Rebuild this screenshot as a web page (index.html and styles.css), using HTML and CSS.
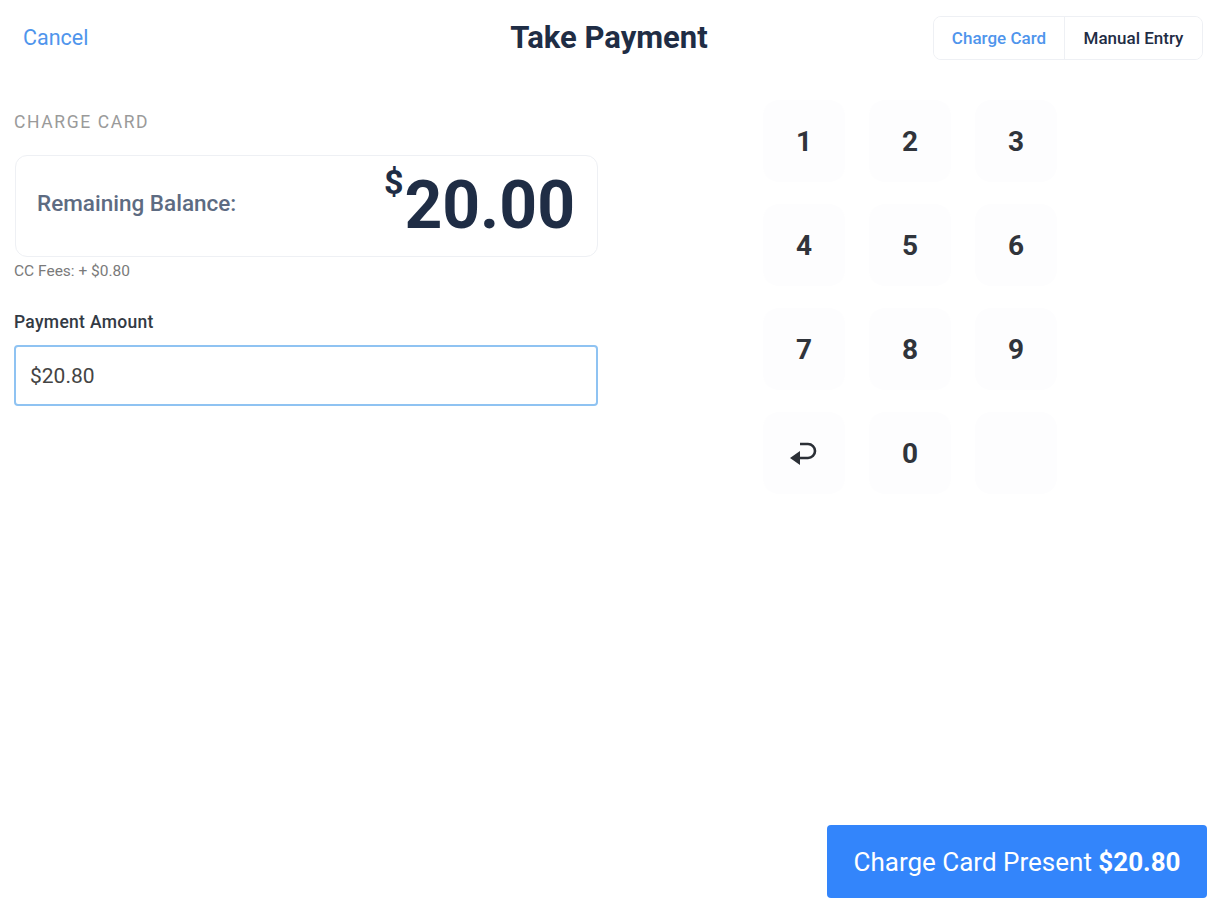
FILE: index.html
```html
<!DOCTYPE html>
<html lang="en">

<head>
    <meta charset="UTF-8">
    <meta name="viewport" content="width=device-width, initial-scale=1.0">
    <title>Take Payment</title>
    <link rel="stylesheet" href="styles.css">
</head>

<body>
    <div class="screen">
        <!-- Top bar -->
        <header class="topbar">
            <a class="cancel" href="#">Cancel</a>
            <h1 class="title">Take Payment</h1>
            <div class="segmented">
                <button class="seg active">Charge Card</button>
                <button class="seg">Manual Entry</button>
            </div>
        </header>

        <main class="content">
            <!-- Balance + amount -->
            <section class="left">
                <div class="section-title">CHARGE CARD</div>
                <div class="balance-card">
                    <span class="balance-label">Remaining Balance:</span>
                    <span class="balance-amount"><sup>$</sup>20.00</span>
                </div>
                <div class="fees">CC Fees: + $0.80</div>

                <label class="field-label" for="amount">Payment Amount</label>
                <input class="amount-input" type="text" id="amount" value="$20.80">
            </section>

            <!-- Keypad -->
            <section class="keypad">
                <button class="key">1</button>
                <button class="key">2</button>
                <button class="key">3</button>
                <button class="key">4</button>
                <button class="key">5</button>
                <button class="key">6</button>
                <button class="key">7</button>
                <button class="key">8</button>
                <button class="key">9</button>
                <button class="key">
                    <svg width="34" height="30" viewBox="0 0 34 30" fill="none">
                        <path d="M12 20h9a7 7 0 0 0 0-14h-8" stroke="#2b2f36" stroke-width="2.6" />
                        <path d="M3 20l10-7v14z" fill="#2b2f36" />
                    </svg>
                </button>
                <button class="key">0</button>
                <button class="key blank"></button>
            </section>
        </main>

        <footer class="footer">
            <button class="charge-btn">Charge Card Present <strong>$20.80</strong></button>
        </footer>
    </div>
</body>

</html>
```

FILE: styles.css
```css
/* Take payment screen */
* {
    box-sizing: border-box;
}

body {
    margin: 0;
    background: #ffffff;
    font-family: Roboto, "Noto Sans", Arial, sans-serif;
    color: #2b2f36;
}

.screen {
    height: 915px;
    display: flex;
    flex-direction: column;
    background: #fff;
}

.topbar {
    height: 75px;
    display: flex;
    align-items: center;
    justify-content: space-between;
    padding: 0 16px 0 23px;
}

.cancel {
    width: 270px;
    color: #4f95ec;
    font-size: 21.5px;
    text-decoration: none;
}

.title {
    margin: 0 0 0 -8px;
    font-size: 31px;
    font-weight: 700;
    color: #1f2d45;
}

.segmented {
    width: 270px;
    height: 44px;
    display: flex;
    border: 1px solid #eef0f4;
    border-radius: 8px;
    overflow: hidden;
}

.seg {
    border: none;
    background: #fff;
    font-family: inherit;
    font-size: 17px;
    font-weight: 500;
    color: #1f2d45;
    cursor: pointer;
    padding: 0;
}

.seg.active {
    width: 131px;
    color: #4f95ec;
    border-right: 1px solid #eef0f4;
}

.seg:last-child {
    flex: 1;
}

.content {
    flex: 1;
    display: flex;
    gap: 165px;
    padding: 0 0 0 14px;
}

.left {
    width: 584px;
    padding-top: 36px;
}

.section-title {
    font-size: 17.5px;
    line-height: 22px;
    letter-spacing: 1.6px;
    color: #9a9a9a;
    margin-bottom: 22px;
}

.balance-card {
    height: 102px;
    margin-left: 1px;
    border: 1px solid #eef0f4;
    border-radius: 12px;
    display: flex;
    align-items: center;
    justify-content: space-between;
    padding: 0 22px 0 21px;
}

.balance-label {
    font-size: 22.5px;
    font-weight: 500;
    color: #5d6b82;
    margin-bottom: 6px;
}

.balance-amount {
    font-size: 66px;
    font-weight: 700;
    color: #1f2d45;
    line-height: 1;
}

.balance-amount sup {
    font-size: 34px;
    vertical-align: top;
    position: relative;
    top: -8px;
    margin-right: 1px;
}

.fees {
    font-size: 15.5px;
    color: #7a7a7a;
    margin-top: 5px;
}

.field-label {
    display: block;
    margin-top: 32px;
    font-size: 17.5px;
    font-weight: 500;
    letter-spacing: 0.3px;
    color: #333a44;
}

.amount-input {
    width: 584px;
    height: 61px;
    margin-top: 13px;
    padding: 0 14px;
    border: 2px solid #8fc3f2;
    border-radius: 4px;
    font-family: inherit;
    font-size: 21px;
    color: #444;
    outline: none;
}

.keypad {
    padding-top: 25px;
    display: grid;
    grid-template-columns: repeat(3, 82px);
    grid-auto-rows: 82px;
    column-gap: 24px;
    row-gap: 22px;
    align-content: start;
}

.key {
    border: none;
    border-radius: 16px;
    background: #fdfdfe;
    font-family: inherit;
    font-size: 28px;
    font-weight: 700;
    color: #30343b;
    display: flex;
    align-items: center;
    justify-content: center;
    cursor: pointer;
}

.footer {
    display: flex;
    justify-content: flex-end;
    padding: 0 12px 17px 0;
}

.charge-btn {
    width: 380px;
    height: 73px;
    border: none;
    border-radius: 4px;
    background: #3385fb;
    color: #fff;
    font-family: inherit;
    font-size: 26px;
    cursor: pointer;
}

.charge-btn strong {
    font-weight: 700;
}
```
